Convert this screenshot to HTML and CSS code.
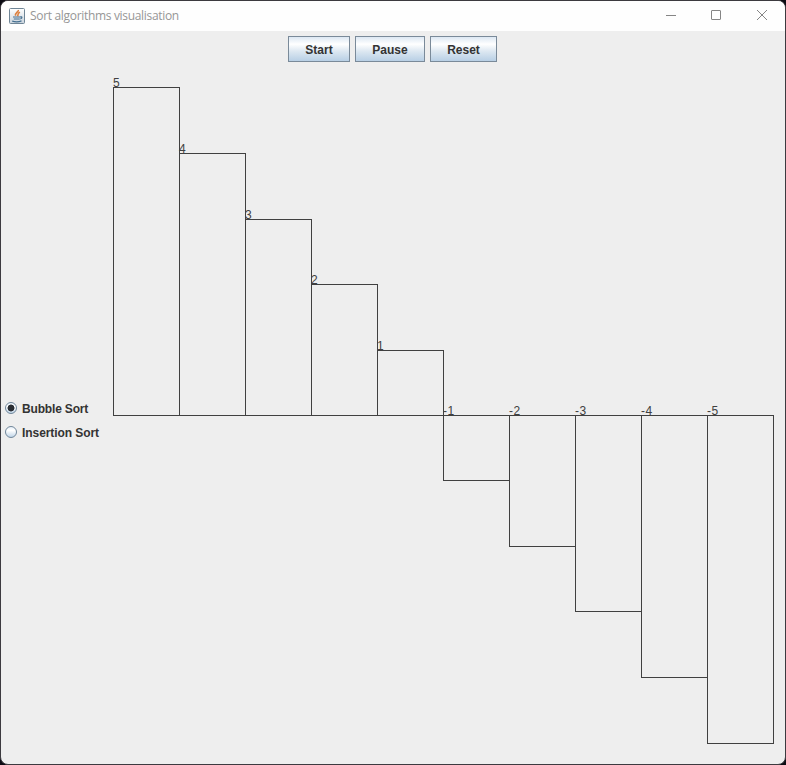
FILE: index.html
```
<!DOCTYPE html>
<html lang="en">
<head>
<meta charset="utf-8">
<title>Sort algorithms visualisation</title>
<link rel="stylesheet" href="styles.css">
</head>
<body>
<main class="window">
  <header class="titlebar">
    <svg class="app-icon" width="16" height="16" viewBox="0 0 16 16" fill="none">
      <defs><linearGradient id="tile" x1="0" y1="0" x2="0" y2="1"><stop offset="0" stop-color="#fff"/><stop offset="1" stop-color="#c9d3dc"/></linearGradient></defs>
      <rect x=".5" y=".5" width="15" height="15" rx="1" fill="url(#tile)" stroke="#6f8596"/>
      <path d="M9.300 2C10 4 5.500 4.700 6.600 7.800M11 4.300C8 5.300 9.700 6.500 8.500 8.200" stroke="#dc8040" stroke-width="1.600"/>
      <path d="M4 9h7M4.800 11h6M11 9c2.300-.6 2.700 1.200.3 2M3.200 13.200c2.700.7 6.800.7 9.300-.3" stroke="#456f90" stroke-width="1.200"/>
    </svg>
    <h1 class="title">Sort algorithms visualisation</h1>
    <svg class="controls" width="102" height="12" viewBox="0 0 102 12" fill="none" stroke="#858585">
      <path d="M0 6.500h10"/>
      <rect x="45.500" y="1.500" width="9" height="9" rx=".4"/>
      <path d="M91 1l10 10M101 1L91 11"/>
    </svg>
  </header>
  <div class="toolbar">
    <button class="btn start">Start</button>
    <button class="btn pause">Pause</button>
    <button class="btn reset">Reset</button>
  </div>
  <div class="content">
    <div class="options">
      <label class="option"><span class="radio checked"></span><span class="bubble">Bubble Sort</span></label>
      <label class="option"><span class="radio"></span><span class="insertion">Insertion Sort</span></label>
    </div>
    <svg class="chart" width="672" height="697" viewBox="0 0 672 697">
      <g class="bars">
        <rect x=".5" y="20.500" width="66" height="328"/>
        <rect x="66.500" y="86.500" width="66" height="262"/>
        <rect x="132.500" y="152.500" width="66" height="196"/>
        <rect x="198.500" y="217.500" width="66" height="131"/>
        <rect x="264.500" y="283.500" width="66" height="65"/>
        <rect x="330.500" y="348.500" width="66" height="65"/>
        <rect x="396.500" y="348.500" width="66" height="131"/>
        <rect x="462.500" y="348.500" width="66" height="196"/>
        <rect x="528.500" y="348.500" width="66" height="262"/>
        <rect x="594.500" y="348.500" width="66" height="328"/>
      </g>
      <g class="values">
        <text x="0" y="20">5</text>
        <text x="66" y="86">4</text>
        <text x="132" y="152">3</text>
        <text x="198" y="217">2</text>
        <text x="264" y="283">1</text>
        <text x="330" y="348">-1</text>
        <text x="396" y="348">-2</text>
        <text x="462" y="348">-3</text>
        <text x="528" y="348">-4</text>
        <text x="594" y="348">-5</text>
      </g>
    </svg>
  </div>
</main>
</body>
</html>
```
FILE: styles.css
```
* { box-sizing: border-box; }
body {
  margin: 0;
  background: #0c0b13;
  font-family: "Liberation Sans", Arial, sans-serif;
}
.window {
  width: 786px;
  height: 765px;
  border: 1px solid #3c3a3f;
  border-radius: 8px;
  background: #eee;
  overflow: hidden;
}
.titlebar {
  display: flex;
  align-items: center;
  height: 30px;
  padding: 0 17px 0 8px;
  background: #fefefe;
}
.app-icon { margin-top: -1px; }
.title {
  margin: 0 auto 0 5px;
  font: 400 12px/16px "Open Sans", "Noto Sans", sans-serif;
  letter-spacing: -0.32px;
  color: #969696;
}
.controls { margin-top: -2px; }
.toolbar {
  display: flex;
  justify-content: center;
  gap: 5px;
  height: 36px;
  padding: 5px 2px 0 0;
}
.btn {
  height: 26px;
  padding: 1px 0 0 1px;
  border: 1px solid #7a8a99;
  background: linear-gradient(#dde8f3 0, #fff 30%, #dce7f1 60%, #b8cfe5 100%);
  color: #333;
  font: bold 12px/24px "Liberation Sans", Arial, sans-serif;
}
.start { width: 62px; }
.pause { width: 70px; }
.reset { width: 67px; }
.content {
  display: flex;
  align-items: center;
  height: 697px;
}
.options {
  width: 112px;
  height: 48px;
  margin-top: 10px;
  padding-left: 4px;
}
.option {
  display: flex;
  align-items: center;
  gap: 5px;
  height: 24px;
  font: bold 12px/14px "Liberation Sans", Arial, sans-serif;
  color: #333;
}
.bubble { letter-spacing: -0.17px; }
.insertion { letter-spacing: -0.07px; }
.radio {
  width: 12px;
  height: 12px;
  margin-top: -2px;
  border: 1px solid #70869a;
  border-radius: 50%;
  background: linear-gradient(#e6eff8, #fff 35%, #c1d5e8);
}
.checked {
  background: radial-gradient(circle, #292d33 0 3.1px, transparent 3.8px), linear-gradient(#e6eff8, #fff 35%, #c1d5e8);
}
.bars {
  fill: none;
  stroke: #404040;
  shape-rendering: crispEdges;
}
.values {
  fill: #404040;
  font: 12px "Liberation Sans", Arial, sans-serif;
  letter-spacing: 0.6px;
}
```
